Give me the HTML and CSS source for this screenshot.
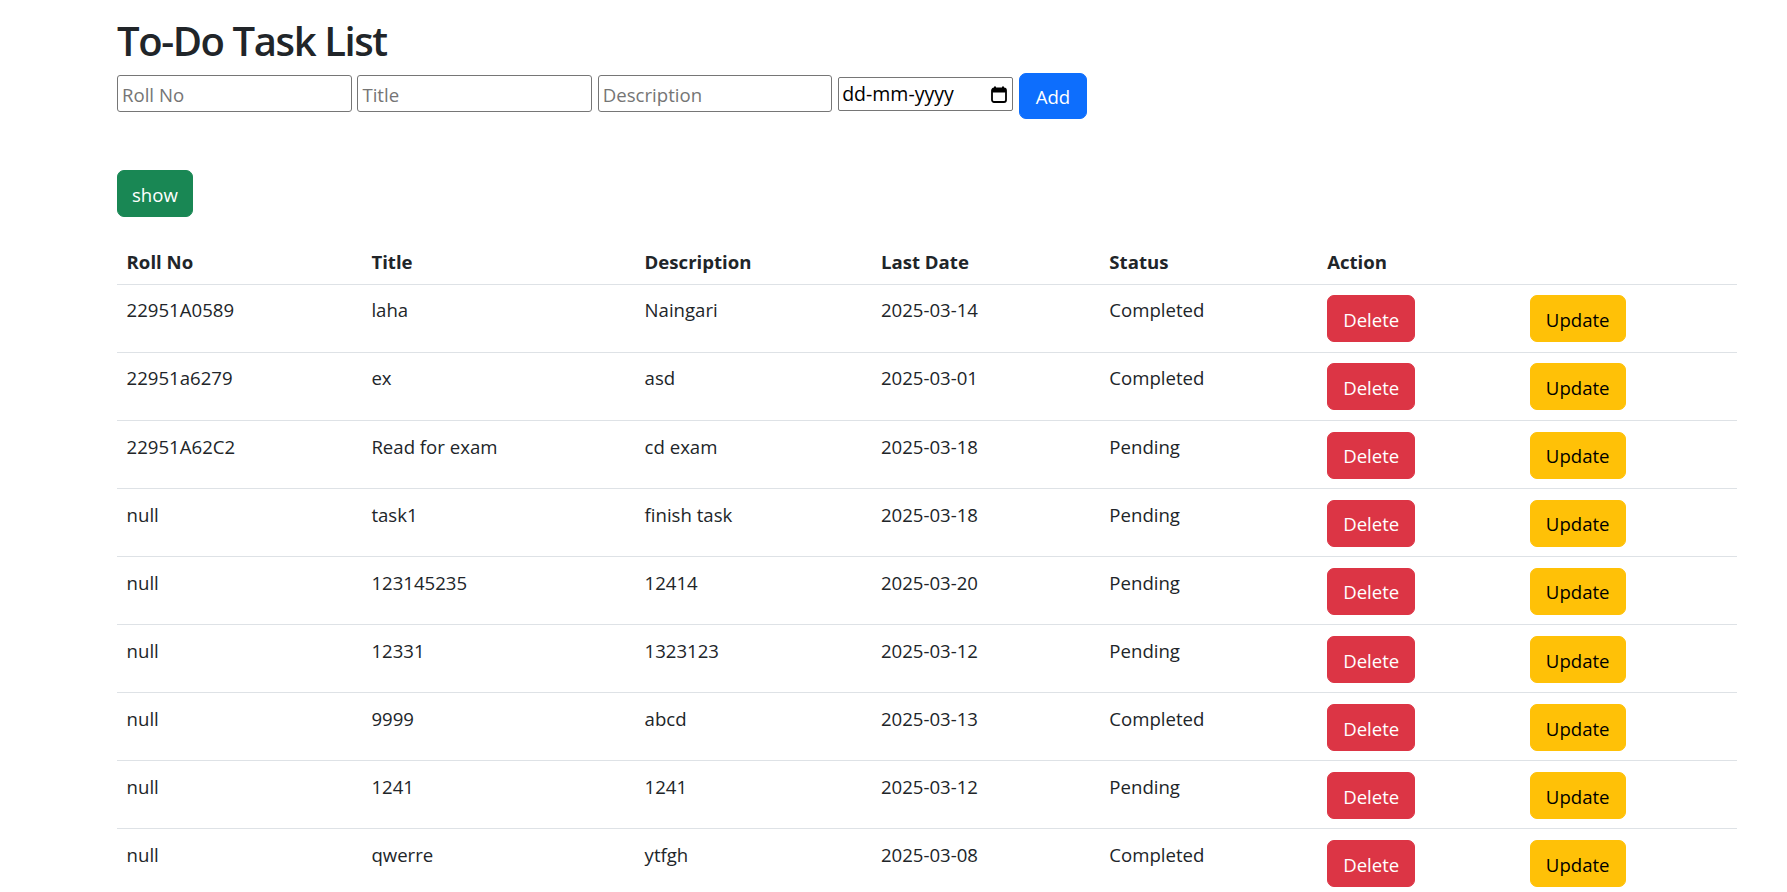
FILE: index.html
```html
<!DOCTYPE html>
<html lang="en">
<head>
<meta charset="utf-8">
<title>To-Do Task List</title>
<link rel="stylesheet" href="styles.css">
</head>
<body>
<div class="page">
  <h1 class="title">To-Do Task List</h1>
  <div class="form-row">
    <input class="field" type="text" placeholder="Roll No">
    <input class="field" type="text" placeholder="Title">
    <input class="field" type="text" placeholder="Description">
    <div class="date-field">
      <span class="date-text">dd-mm-yyyy</span>
      <svg class="cal-icon" width="16" height="17" viewBox="0 0 16 17" aria-hidden="true">
        <rect x="1" y="2.5" width="14" height="13.5" rx="2" fill="none" stroke="#000" stroke-width="1.8"/>
        <rect x="1" y="2.5" width="14" height="4" rx="1" fill="#000"/>
        <rect x="3" y="0.5" width="2" height="3" fill="#000"/>
        <rect x="11" y="0.5" width="2" height="3" fill="#000"/>
      </svg>
    </div>
    <button class="btn btn-primary btn-add">Add</button>
  </div>
  <button class="btn btn-success btn-show">show</button>
  <table class="tasks">
    <colgroup>
      <col class="c1"><col class="c2"><col class="c3"><col class="c4"><col class="c5"><col class="c6"><col class="c7">
    </colgroup>
    <thead>
      <tr><th>Roll No</th><th>Title</th><th>Description</th><th>Last Date</th><th>Status</th><th>Action</th><th></th></tr>
    </thead>
    <tbody>
      <tr><td>22951A0589</td><td>laha</td><td>Naingari</td><td>2025-03-14</td><td>Completed</td><td><button class="btn btn-danger">Delete</button></td><td><button class="btn btn-warning">Update</button></td></tr>
      <tr><td>22951a6279</td><td>ex</td><td>asd</td><td>2025-03-01</td><td>Completed</td><td><button class="btn btn-danger">Delete</button></td><td><button class="btn btn-warning">Update</button></td></tr>
      <tr><td>22951A62C2</td><td>Read for exam</td><td>cd exam</td><td>2025-03-18</td><td>Pending</td><td><button class="btn btn-danger">Delete</button></td><td><button class="btn btn-warning">Update</button></td></tr>
      <tr><td>null</td><td>task1</td><td>finish task</td><td>2025-03-18</td><td>Pending</td><td><button class="btn btn-danger">Delete</button></td><td><button class="btn btn-warning">Update</button></td></tr>
      <tr><td>null</td><td>123145235</td><td>12414</td><td>2025-03-20</td><td>Pending</td><td><button class="btn btn-danger">Delete</button></td><td><button class="btn btn-warning">Update</button></td></tr>
      <tr><td>null</td><td>12331</td><td>1323123</td><td>2025-03-12</td><td>Pending</td><td><button class="btn btn-danger">Delete</button></td><td><button class="btn btn-warning">Update</button></td></tr>
      <tr><td>null</td><td>9999</td><td>abcd</td><td>2025-03-13</td><td>Completed</td><td><button class="btn btn-danger">Delete</button></td><td><button class="btn btn-warning">Update</button></td></tr>
      <tr><td>null</td><td>1241</td><td>1241</td><td>2025-03-12</td><td>Pending</td><td><button class="btn btn-danger">Delete</button></td><td><button class="btn btn-warning">Update</button></td></tr>
      <tr><td>null</td><td>qwerre</td><td>ytfgh</td><td>2025-03-08</td><td>Completed</td><td><button class="btn btn-danger">Delete</button></td><td><button class="btn btn-warning">Update</button></td></tr>
    </tbody>
  </table>
</div>
</body>
</html>
```
FILE: styles.css
```css
html {
  overflow: hidden;
}

body {
  margin: 0;
  background: #fff;
  color: #212529;
  font-family: "Open Sans", "Noto Sans", sans-serif;
  font-size: 18.6px;
  line-height: 28.8px;
}

.page {
  padding: 12px 0 0 117px;
}

.title {
  margin: 0 0 2.7px;
  font-size: 40px;
  line-height: 58px;
  font-weight: 600;
  letter-spacing: -1.4px;
  color: #212529;
}

.form-row {
  display: flex;
  align-items: flex-start;
  gap: 5.8px;
}

.field {
  box-sizing: border-box;
  width: 234.6px;
  height: 36.4px;
  margin: 2.6px 0 0;
  padding: 2px 4px 0;
  border: 1px solid #767676;
  border-radius: 3px;
  font-family: "Open Sans", "Noto Sans", sans-serif;
  font-size: 18.6px;
  color: #212529;
  background: #fff;
  outline: none;
}

.field::placeholder {
  color: #757575;
}

.date-field {
  box-sizing: border-box;
  display: flex;
  align-items: center;
  width: 174.7px;
  height: 33.4px;
  margin-top: 4.6px;
  padding: 1px 5px 0 3px;
  border: 1px solid #767676;
  border-radius: 2px;
  background: #fff;
}

.date-text {
  font-size: 19.5px;
  line-height: 30px;
  color: #000;
}

.cal-icon {
  display: block;
  margin-left: auto;
}

.btn {
  box-sizing: border-box;
  display: inline-block;
  vertical-align: top;
  height: 47px;
  padding: 2.5px 15px 0;
  border: 1px solid transparent;
  border-radius: 7px;
  font-family: "Open Sans", "Noto Sans", sans-serif;
  font-size: 18.6px;
  line-height: 42px;
  font-weight: 400;
  cursor: pointer;
}

.btn-primary {
  background: #0d6efd;
  border-color: #0d6efd;
  color: #fff;
}

.btn-add {
  height: 46.7px;
  padding: 2.5px 16px 0;
}

.btn-success {
  background: #198754;
  border-color: #198754;
  color: #fff;
}

.btn-show {
  display: block;
  height: 46.7px;
  margin-top: 50.6px;
  padding: 2.5px 14px 0;
}

.btn-danger {
  background: #dc3545;
  border-color: #dc3545;
  color: #fff;
}

.btn-warning {
  background: #ffc107;
  border-color: #ffc107;
  color: #000;
}

.tasks {
  width: 1620px;
  margin-top: 19.1px;
  border-collapse: collapse;
  table-layout: fixed;
}

.c1 { width: 244.8px; }
.c2 { width: 273.2px; }
.c3 { width: 236.4px; }
.c4 { width: 228.4px; }
.c5 { width: 217.8px; }
.c6 { width: 202.7px; }
.c7 { width: 216.7px; }

.tasks th,
.tasks td {
  text-align: left;
  vertical-align: top;
  border-bottom: 1px solid #dee2e6;
}

.tasks th {
  padding: 12.6px 9.6px 6.6px;
  font-weight: 700;
}

.tasks td {
  padding: 10.6px 9.6px 9.5px;
  font-weight: 400;
}

.tasks td:nth-child(-n+5) {
  padding-top: 11.6px;
  padding-bottom: 8.5px;
}
```
